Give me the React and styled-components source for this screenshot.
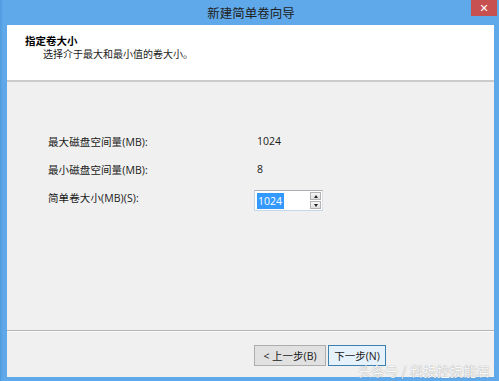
import React from "react";
import styled, { createGlobalStyle } from "styled-components";

const GlobalStyle = createGlobalStyle`
  html, body {
    margin: 0;
    padding: 0;
    width: 499px;
    height: 381px;
    overflow: hidden;
    background: #5fa9ea;
  }
`;

const Window = styled.div`
  width: 499px;
  height: 381px;
  display: flex;
  flex-direction: column;
  background: linear-gradient(90deg, #4f9be0 0, #5fa9ea 3px, #5fa9ea 100%);
  font-family: "Open Sans", "Noto Sans CJK SC", sans-serif;
  color: #1a1a1a;
  box-sizing: border-box;
`;

const TitleBar = styled.div`
  height: 25px;
  flex: none;
  display: grid;
  grid-template-columns: 1fr auto 1fr;
  align-items: center;
`;

const Title = styled.div`
  grid-column: 2;
  font-family: "Noto Sans CJK SC", sans-serif;
  font-size: 12.5px;
  color: #202020;
  padding-left: 3px;
`;

const CloseButton = styled.div`
  justify-self: end;
  align-self: start;
  width: 26px;
  height: 16px;
  margin-right: 2px;
  background: #c75050;
  color: #fff;
  display: flex;
  align-items: center;
  justify-content: center;
  font-size: 11px;
  font-weight: bold;
  font-family: "DejaVu Sans", sans-serif;
`;

const Frame = styled.div`
  flex: 1;
  margin: 0 5px 4px 7px;
  display: flex;
  flex-direction: column;
  position: relative;
  background: #f0f0f0;
`;

const Header = styled.div`
  height: 57px;
  flex: none;
  box-sizing: border-box;
  background: #fff;
  border-bottom: 2px solid #cbcbcb;
  padding: 9px 0 0 18px;
`;

const HeaderTitle = styled.div`
  font-family: "Noto Sans CJK SC", sans-serif;
  font-weight: bold;
  font-size: 10.5px;
  line-height: 13px;
  color: #000;
`;

const HeaderSub = styled.div`
  font-family: "Noto Sans CJK SC", sans-serif;
  font-size: 10px;
  line-height: 13px;
  padding-left: 18px;
  color: #1a1a1a;
`;

const Content = styled.div`
  flex: 1;
  padding: 45px 0 0 41px;
  display: flex;
  flex-direction: column;
`;

const Row = styled.div`
  height: 28px;
  display: grid;
  grid-template-columns: 206px auto;
  align-items: center;
  font-size: 10.5px;
`;

const Label = styled.div`
  color: #1a1a1a;
  letter-spacing: 0.1px;
`;

const Value = styled.div`
  padding-left: 3px;
  color: #1a1a1a;
`;

const SpinBox = styled.div`
  align-self: end;
  width: 69px;
  height: 21px;
  box-sizing: border-box;
  border: 1px solid;
  border-color: #abadb3 #dbdfe6 #c5d6ea #c3d4e8;
  background: #fff;
  display: flex;
  align-items: center;
  justify-content: space-between;
  padding: 0 1px 0 2px;
`;

const Selected = styled.span`
  background: #3399ff;
  color: #fff;
  font-size: 10.5px;
  line-height: 16px;
  padding: 0 2px 0 1px;
`;

const SpinButtons = styled.div`
  display: flex;
  flex-direction: column;
  gap: 1px;
`;

const SpinButton = styled.div`
  width: 11px;
  height: 8px;
  box-sizing: border-box;
  border: 1px solid #b3b3b3;
  background: linear-gradient(#f6f6f6, #dedede);
  display: flex;
  align-items: center;
  justify-content: center;
`;

const Arrow = styled.div`
  width: 0;
  height: 0;
  border-left: 2.5px solid transparent;
  border-right: 2.5px solid transparent;
  ${(p) =>
    p.$down ? "border-top: 3px solid #222;" : "border-bottom: 3px solid #222;"}
`;

const Footer = styled.div`
  height: 47px;
  flex: none;
  box-sizing: border-box;
  border-top: 1px solid #b4b4b4;
  box-shadow: inset 0 1px #fbfbfb;
  display: flex;
  justify-content: flex-end;
  align-items: flex-start;
  gap: 2px;
  padding: 14px 108px 0 0;
`;

const Button = styled.div`
  width: ${(p) => p.$width}px;
  height: 21px;
  box-sizing: border-box;
  border: 1px solid ${(p) => (p.$primary ? "#3c7fb1" : "#adadad")};
  background: ${(p) => (p.$primary ? "#e5f1fb" : "#e1e1e1")};
  font-size: 10.5px;
  display: flex;
  align-items: center;
  justify-content: center;
  color: #1a1a1a;
`;

const Watermark = styled.div`
  position: absolute;
  right: 4px;
  bottom: -1px;
  font-family: "Noto Sans CJK SC", sans-serif;
  font-size: 13px;
  line-height: 15px;
  color: rgba(255, 255, 255, 0.95);
  text-shadow: 0 0 1px rgba(120, 120, 120, 0.9);
  letter-spacing: 0.3px;
`;

const rows = [
  { label: "最大磁盘空间量(MB):", value: "1024" },
  { label: "最小磁盘空间量(MB):", value: "8" },
];

export default function App() {
  return (
    <>
      <GlobalStyle />
      <Window>
        <TitleBar>
          <Title>新建简单卷向导</Title>
          <CloseButton>✕</CloseButton>
        </TitleBar>
        <Frame>
          <Header>
            <HeaderTitle>指定卷大小</HeaderTitle>
            <HeaderSub>选择介于最大和最小值的卷大小。</HeaderSub>
          </Header>
          <Content>
            {rows.map((r) => (
              <Row key={r.label}>
                <Label>{r.label}</Label>
                <Value>{r.value}</Value>
              </Row>
            ))}
            <Row>
              <Label>简单卷大小(MB)(S):</Label>
              <SpinBox>
                <Selected>1024</Selected>
                <SpinButtons>
                  <SpinButton>
                    <Arrow />
                  </SpinButton>
                  <SpinButton>
                    <Arrow $down />
                  </SpinButton>
                </SpinButtons>
              </SpinBox>
            </Row>
          </Content>
          <Footer>
            <Button $width={72}>&lt; 上一步(B)</Button>
            <Button $width={58} $primary>
              下一步(N)
            </Button>
          </Footer>
          <Watermark>头条号 / 科技控技能君</Watermark>
        </Frame>
      </Window>
    </>
  );
}
